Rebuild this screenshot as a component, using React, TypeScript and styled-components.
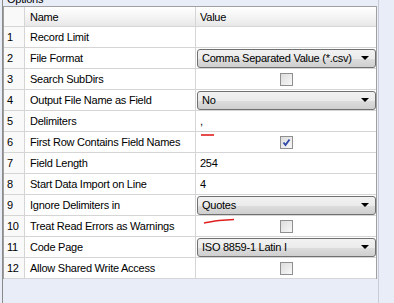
import React from "react";
import styled, { createGlobalStyle } from "styled-components";

const Global = createGlobalStyle`
  html, body { margin: 0; padding: 0; }
  body { background: #e9edf8; font-family: "Liberation Sans", Arial, sans-serif; font-size: 11px; color: #000; }
`;

const Page = styled.div`
  width: 394px;
  height: 303px;
  overflow: hidden;
  background: #e9edf8;
  position: relative;
  letter-spacing: -0.25px;
`;

const GroupBox = styled.div`
  margin-left: 2px;
  width: 377px;
  height: 310px;
  margin-top: -6px;
  border-left: 1px solid #8a8a8a;
  border-right: 1px solid #c8ccd6;
  box-sizing: border-box;
`;

const Caption = styled.div`
  height: 12px;
  line-height: 10px;
  padding-left: 4px;
  font-size: 11px;
  color: #000;
  overflow: hidden;
`;

const Grid = styled.div`
  position: relative;
  width: 374px;
  border: 1px solid #a0a0a0;
  border-bottom: none;
  background: #fff;
  box-sizing: border-box;
`;

const Row = styled.div<{ $header?: boolean }>`
  display: grid;
  grid-template-columns: 21px 171px 181px;
  height: ${(p) => (p.$header ? 20 : 21)}px;
  box-sizing: border-box;
  border-bottom: 1px solid #d5d5d5;
  background: ${(p) => (p.$header ? "linear-gradient(#ffffff, #f2f2f2 60%, #e8e8e8)" : "#fff")};
`;

const Cell = styled.div<{ $num?: boolean; $center?: boolean }>`
  display: flex;
  align-items: center;
  justify-content: ${(p) => (p.$center ? "center" : "flex-start")};
  padding-left: ${(p) => (p.$num ? 3 : p.$center ? 0 : 5)}px;
  border-right: 1px solid #d5d5d5;
  box-sizing: border-box;
  white-space: nowrap;
  overflow: hidden;
  background: ${(p) => (p.$num ? "#f9f9f9" : "transparent")};
`;

const ValueCell = styled(Cell)`
  border-right: none;
  padding-left: 4px;
`;

const Combo = styled.div`
  flex: 1;
  height: 19px;
  margin: 0 1px 0 -3px;
  box-sizing: border-box;
  border: 1px solid #707070;
  border-radius: 3px;
  background: linear-gradient(#f2f2f2 0%, #ebebeb 50%, #dddddd 51%, #cfcfcf 100%);
  display: flex;
  align-items: center;
  padding: 0 6px 0 4px;
`;

const ComboText = styled.span`
  flex: 1;
`;

const Arrow = styled.span`
  width: 0;
  height: 0;
  border-left: 4px solid transparent;
  border-right: 4px solid transparent;
  border-top: 4px solid #000;
`;

const Check = styled.div`
  width: 13px;
  height: 13px;
  box-sizing: border-box;
  border: 1px solid #8f8f8f;
  background: linear-gradient(135deg, #dcdcdc, #f8f8f8);
  display: flex;
  align-items: center;
  justify-content: center;
`;

const Mark = styled.svg`
  position: absolute;
  pointer-events: none;
`;

type V =
  | { kind: "text"; v: string }
  | { kind: "combo"; v: string }
  | { kind: "check"; v: boolean }
  | { kind: "empty" };

const rows: { n: string; name: string; value: V }[] = [
  { n: "1", name: "Record Limit", value: { kind: "empty" } },
  { n: "2", name: "File Format", value: { kind: "combo", v: "Comma Separated Value (*.csv)" } },
  { n: "3", name: "Search SubDirs", value: { kind: "check", v: false } },
  { n: "4", name: "Output File Name as Field", value: { kind: "combo", v: "No" } },
  { n: "5", name: "Delimiters", value: { kind: "text", v: "," } },
  { n: "6", name: "First Row Contains Field Names", value: { kind: "check", v: true } },
  { n: "7", name: "Field Length", value: { kind: "text", v: "254" } },
  { n: "8", name: "Start Data Import on Line", value: { kind: "text", v: "4" } },
  { n: "9", name: "Ignore Delimiters in", value: { kind: "combo", v: "Quotes" } },
  { n: "10", name: "Treat Read Errors as Warnings", value: { kind: "check", v: false } },
  { n: "11", name: "Code Page", value: { kind: "combo", v: "ISO 8859-1 Latin I" } },
  { n: "12", name: "Allow Shared Write Access", value: { kind: "check", v: false } },
];

function Value({ value }: { value: V }) {
  if (value.kind === "combo") {
    return (
      <ValueCell>
        <Combo>
          <ComboText>{value.v}</ComboText>
          <Arrow />
        </Combo>
      </ValueCell>
    );
  }
  if (value.kind === "check") {
    return (
      <Cell $center style={{ borderRight: "none" }}>
        <Check>
          {value.v && (
            <svg width="9" height="9" viewBox="0 0 9 9">
              <path d="M1.5 4.5 L3.5 7 L7.5 1.5" stroke="#2c47a8" strokeWidth="1.8" fill="none" />
            </svg>
          )}
        </Check>
      </Cell>
    );
  }
  return <ValueCell>{value.kind === "text" ? value.v : ""}</ValueCell>;
}

export default function App() {
  return (
    <Page>
      <Global />
      <GroupBox>
        <Caption>Options</Caption>
        <Grid>
          <Row $header>
            <Cell $num />
            <Cell>Name</Cell>
            <ValueCell>Value</ValueCell>
          </Row>
          {rows.map((r) => (
            <Row key={r.n}>
              <Cell $num>{r.n}</Cell>
              <Cell>{r.name}</Cell>
              <Value value={r.value} />
            </Row>
          ))}
          <Mark width="16" height="4" style={{ left: 196, top: 126 }} viewBox="0 0 16 4">
            <path d="M1 2 L14 2" stroke="#e02020" strokeWidth="1.6" fill="none" />
          </Mark>
          <Mark width="34" height="8" style={{ left: 198, top: 210 }} viewBox="0 0 34 8">
            <path d="M2 6 C 8 5, 12 4, 17 3.5 L 32 2.5" stroke="#e02020" strokeWidth="1.6" fill="none" />
          </Mark>
        </Grid>
      </GroupBox>
    </Page>
  );
}
